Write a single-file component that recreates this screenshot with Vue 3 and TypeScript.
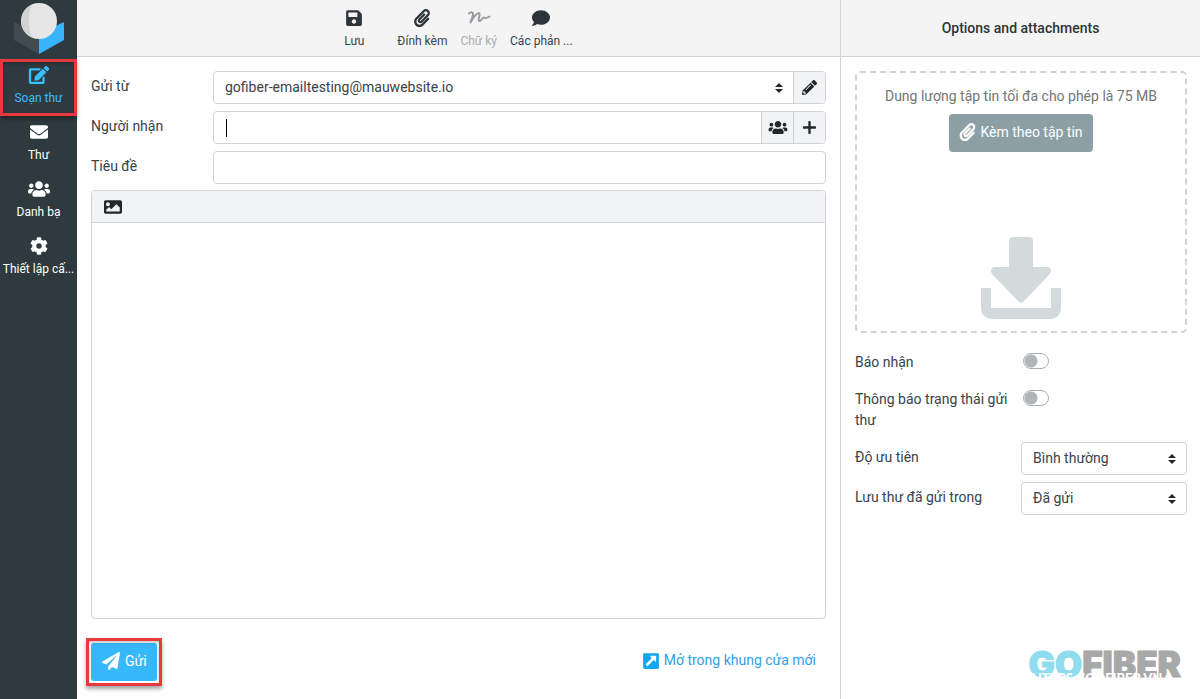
<script setup lang="ts">
import { ref } from 'vue'

interface Icon {
  box: string
  d: string
}

const icons: Record<string, Icon> = {
  edit: {
    box: '0 0 576 512',
    d: 'M402.6 83.2l90.2 90.2c3.8 3.8 3.8 10 0 13.8L274.4 405.6l-92.8 10.3c-12.4 1.4-22.9-9.1-21.5-21.5l10.3-92.8L388.8 83.2c3.8-3.8 10-3.8 13.8 0zm162-22.9l-48.8-48.8c-15.2-15.2-39.9-15.2-55.2 0l-35.4 35.4c-3.8 3.8-3.8 10 0 13.8l90.2 90.2c3.8 3.8 10 3.8 13.8 0l35.4-35.4c15.2-15.3 15.2-40 0-55.2zM384 346.2V448H64V128h229.8c3.2 0 6.2-1.3 8.5-3.5l40-40c7.6-7.6 2.2-20.5-8.5-20.5H48C21.5 64 0 85.5 0 112v352c0 26.5 21.5 48 48 48h352c26.5 0 48-21.5 48-48V306.2c0-10.7-12.9-16-20.5-8.5l-40 40c-2.2 2.3-3.5 5.3-3.5 8.5z',
  },
  envelope: {
    box: '0 0 512 512',
    d: 'M502.3 190.8c3.9-3.1 9.7-.2 9.7 4.7V400c0 26.5-21.5 48-48 48H48c-26.5 0-48-21.5-48-48V195.6c0-5 5.7-7.8 9.7-4.7 22.4 17.4 52.1 39.5 154.1 113.6 21.1 15.4 56.7 47.8 92.2 47.6 35.7.3 72-32.8 92.3-47.6 102-74.1 131.6-96.3 154-113.7zM256 320c23.2.4 56.6-29.2 73.4-41.4 132.7-96.3 142.8-104.7 173.4-128.7 5.8-4.5 9.2-11.5 9.2-18.9v-19c0-26.5-21.5-48-48-48H48c-26.5 0-48 21.5-48 48v19c0 7.4 3.4 14.3 9.2 18.9 30.6 23.9 40.7 32.4 173.4 128.7 16.8 12.2 50.2 41.8 73.4 41.4z',
  },
  users: {
    box: '0 0 640 512',
    d: 'M96 224c35.3 0 64-28.7 64-64s-28.7-64-64-64-64 28.7-64 64 28.7 64 64 64zm448 0c35.3 0 64-28.7 64-64s-28.7-64-64-64-64 28.7-64 64 28.7 64 64 64zm32 32h-64c-17.6 0-33.5 7.1-45.1 18.6 40.3 22.1 68.9 62 75.1 109.4h66c17.7 0 32-14.3 32-32v-32c0-35.3-28.7-64-64-64zm-256 0c61.9 0 112-50.1 112-112S381.9 32 320 32 208 82.1 208 144s50.1 112 112 112zm76.8 32h-8.3c-20.8 10-43.9 16-68.5 16s-47.6-6-68.5-16h-8.3C179.6 288 128 339.6 128 403.2V432c0 26.5 21.5 48 48 48h288c26.5 0 48-21.5 48-48v-28.8c0-63.6-51.6-115.2-115.2-115.2zm-223.7-13.4C161.5 263.1 145.6 256 128 256H64c-35.3 0-64 28.7-64 64v32c0 17.7 14.3 32 32 32h65.9c6.3-47.4 34.9-87.3 75.2-109.4z',
  },
  cog: {
    box: '0 0 512 512',
    d: 'M487.4 315.7l-42.6-24.6c4.3-23.2 4.3-47 0-70.2l42.6-24.6c4.9-2.8 7.1-8.6 5.5-14-11.1-35.6-30-67.8-54.7-94.6-3.8-4.1-10-5.1-14.8-2.3L380.8 110c-17.9-15.4-38.5-27.3-60.8-35.1V25.8c0-5.6-3.9-10.5-9.4-11.7-36.7-8.2-74.3-7.8-109.2 0-5.5 1.2-9.4 6.1-9.4 11.7V75c-22.2 7.9-42.8 19.8-60.8 35.1L88.7 85.5c-4.9-2.8-11-1.9-14.8 2.3-24.7 26.7-43.6 58.9-54.7 94.6-1.7 5.4.6 11.2 5.5 14L67.3 221c-4.3 23.2-4.3 47 0 70.2l-42.6 24.6c-4.9 2.8-7.1 8.6-5.5 14 11.1 35.6 30 67.8 54.7 94.6 3.8 4.1 10 5.1 14.8 2.3l42.6-24.6c17.9 15.4 38.5 27.3 60.8 35.1v49.2c0 5.6 3.9 10.5 9.4 11.7 36.7 8.2 74.3 7.8 109.2 0 5.5-1.2 9.4-6.1 9.4-11.7v-49.2c22.2-7.9 42.8-19.8 60.8-35.1l42.6 24.6c4.9 2.8 11 1.9 14.8-2.3 24.7-26.7 43.6-58.9 54.7-94.6 1.5-5.5-.7-11.3-5.6-14.1zM256 336c-44.1 0-80-35.9-80-80s35.9-80 80-80 80 35.9 80 80-35.9 80-80 80z',
  },
  save: {
    box: '0 0 448 512',
    d: 'M433.9 129.9l-83.9-83.8A48 48 0 0 0 316.1 32H48C21.5 32 0 53.5 0 80v352c0 26.5 21.5 48 48 48h352c26.5 0 48-21.5 48-48V163.9a48 48 0 0 0-14.1-34zM224 416c-35.3 0-64-28.7-64-64s28.7-64 64-64 64 28.7 64 64-28.7 64-64 64zm96-304.5V212c0 6.6-5.4 12-12 12H76c-6.6 0-12-5.4-12-12V108c0-6.6 5.4-12 12-12h228.5c3.2 0 6.2 1.3 8.5 3.5l3.5 3.5a12 12 0 0 1 3.5 8.5z',
  },
  paperclip: {
    box: '0 0 448 512',
    d: 'M43.246 466.142c-58.43-60.289-57.341-157.511 1.386-217.581L254.392 34c44.316-45.332 116.351-45.336 160.671 0 43.89 44.894 43.943 117.329 0 162.276L232.214 383.128c-29.855 30.537-78.633 30.111-107.982-.998-28.275-29.97-27.368-77.473 1.452-106.953l143.743-146.835c6.182-6.314 16.312-6.422 22.626-.241l22.861 22.379c6.315 6.182 6.422 16.312.241 22.626L171.427 319.927c-4.932 5.045-5.236 13.428-.648 18.292 4.372 4.634 11.245 4.711 15.688.165l182.849-186.851c19.613-20.062 19.613-52.725-.011-72.798-19.189-19.627-49.957-19.637-69.154 0L90.39 293.295c-34.763 35.56-35.299 93.12-1.191 128.313 34.01 35.093 88.985 35.137 123.058.286l172.06-175.999c6.177-6.319 16.307-6.433 22.626-.256l22.877 22.364c6.319 6.177 6.434 16.307.256 22.626l-172.06 175.998c-59.576 60.938-155.943 60.216-214.77-.485z',
  },
  comment: {
    box: '0 0 512 512',
    d: 'M256 32C114.6 32 0 125.1 0 240c0 49.6 21.4 95 57 130.7C44.5 421.1 2.7 466 2.2 466.5c-2.2 2.3-2.8 5.7-1.5 8.7S4.8 480 8 480c66.3 0 116-31.8 140.6-51.4 32.7 12.3 69 19.4 107.4 19.4 141.4 0 256-93.1 256-208S397.4 32 256 32z',
  },
  pencil: {
    box: '0 0 512 512',
    d: 'M497.9 142.1l-46.1 46.1c-4.7 4.7-12.3 4.7-17 0l-111-111c-4.7-4.7-4.7-12.3 0-17l46.1-46.1c18.7-18.7 49.1-18.7 67.9 0l60.1 60.1c18.8 18.7 18.8 49.1 0 67.9zM284.2 99.8L21.6 362.4.4 483.9c-2.9 16.4 11.4 30.6 27.8 27.8l121.5-21.3 262.6-262.6c4.7-4.7 4.7-12.3 0-17l-111-111c-4.8-4.7-12.4-4.7-17.1 0zM124.1 339.9c-5.5-5.5-5.5-14.3 0-19.8l154-154c5.5-5.5 14.3-5.5 19.8 0s5.5 14.3 0 19.8l-154 154c-5.5 5.5-14.3 5.5-19.8 0zM88 424h48v36.3l-64.5 11.3-31.1-31.1L51.7 376H88v48z',
  },
  plus: {
    box: '0 0 448 512',
    d: 'M424 216H264V56c0-13-11-24-24-24h-32c-13 0-24 11-24 24v160H24c-13 0-24 11-24 24v32c0 13 11 24 24 24h160v160c0 13 11 24 24 24h32c13 0 24-11 24-24V296h160c13 0 24-11 24-24v-32c0-13-11-24-24-24z',
  },
  image: {
    box: '0 0 512 512',
    d: 'M464 448H48c-26.5 0-48-21.5-48-48V112c0-26.5 21.5-48 48-48h416c26.5 0 48 21.5 48 48v288c0 26.5-21.5 48-48 48zM112 120c-30.9 0-56 25.1-56 56s25.1 56 56 56 56-25.1 56-56-25.1-56-56-56zM64 384h384V272l-87.5-87.5c-4.7-4.7-12.3-4.7-17 0L208 320l-55.5-55.5c-4.7-4.7-12.3-4.7-17 0L64 336v48z',
  },
  plane: {
    box: '0 0 512 512',
    d: 'M476 3.2L12.5 270.6c-18.1 10.4-15.8 35.6 2.2 43.2L121 358.4l287.3-253.2c5.5-4.9 13.3 2.6 8.6 8.3L176 407v80.5c0 23.6 28.5 32.9 42.5 15.8L282 426l124.6 52.2c14.2 6 30.4-2.9 33-18.2l72-432C515 7.8 493.3-6.8 476 3.2z',
  },
  external: {
    box: '0 0 448 512',
    d: 'M448 68v376c0 20-16 36-36 36H36c-20 0-36-16-36-36V68c0-20 16-36 36-36h376c20 0 36 16 36 36zM370 108H220c-16 0-24 18-13 29l38 38L78 342c-7 7-7 15 0 22l34 34c7 7 15 7 22 0l167-167 40 40c11 11 29 3 29-12V108z',
  },
}

const tasks = [
  { icon: 'edit', label: 'Soạn thư', active: true },
  { icon: 'envelope', label: 'Thư', active: false },
  { icon: 'users', label: 'Danh bạ', active: false },
  { icon: 'cog', label: 'Thiết lập cấ...', active: false },
]

const sender = ref('gofiber-emailtesting@mauwebsite.io')
const recipient = ref('')
const subject = ref('')
const message = ref('')
const receipt = ref(false)
const delivery = ref(false)
const priority = ref('Bình thường')
const folder = ref('Đã gửi')
</script>

<template>
  <div class="app">
    <nav class="sidebar">
      <svg class="logo" viewBox="0 0 50 52" aria-hidden="true">
        <path d="M0 19L25 31V51L0 37z" fill="#404c51" />
        <path d="M50 19L25 31V51L50 37z" fill="#37b4fb" />
        <circle cx="25" cy="18" r="18" fill="#e6e6e6" />
        <path d="M18 1.500a18 18 0 0 0 0 33C14 26 14 9 18 1.500z" fill="#d2d2d2" />
      </svg>
      <a v-for="t in tasks" :key="t.label" href="#" class="task" :class="{ active: t.active }">
        <svg :viewBox="icons[t.icon].box" aria-hidden="true"><path :d="icons[t.icon].d" /></svg>
        <span>{{ t.label }}</span>
        <i v-if="t.active" class="mark"></i>
      </a>
    </nav>

    <main class="compose">
      <header class="bar toolbar">
        <button type="button" class="tool wide">
          <svg :viewBox="icons.save.box" aria-hidden="true"><path :d="icons.save.d" /></svg>
          <span>Lưu</span>
        </button>
        <button type="button" class="tool">
          <svg :viewBox="icons.paperclip.box" aria-hidden="true"><path :d="icons.paperclip.d" /></svg>
          <span>Đính kèm</span>
        </button>
        <button type="button" class="tool" disabled>
          <svg class="signature" viewBox="0 0 24 18" aria-hidden="true">
            <path d="M2 4.500C4 2.500 6.500 3 6 6C5.500 9 4 11 3.500 13.500C6 9 9 4 12 4C14 4.500 10.500 11 12 12C14 12.500 15 8.500 17 8.500C18.500 8.500 18 10.500 22.500 7.500" />
          </svg>
          <span>Chữ ký</span>
        </button>
        <button type="button" class="tool">
          <svg :viewBox="icons.comment.box" aria-hidden="true"><path :d="icons.comment.d" /></svg>
          <span>Các phản ...</span>
        </button>
      </header>

      <form class="form" @submit.prevent>
        <div class="fields">
          <div class="row">
            <label for="from">Gửi từ</label>
            <div class="group">
              <div class="select">
                <select id="from" v-model="sender">
                  <option>gofiber-emailtesting@mauwebsite.io</option>
                </select>
                <svg viewBox="0 0 8 10" aria-hidden="true"><path d="M4 0L8 4H0zM4 10L0 6H8z" /></svg>
              </div>
              <button type="button" class="addon" aria-label="Sửa">
                <svg :viewBox="icons.pencil.box" aria-hidden="true"><path :d="icons.pencil.d" /></svg>
              </button>
            </div>
          </div>
          <div class="row">
            <label for="to">Người nhận</label>
            <div class="group">
              <input id="to" v-model="recipient" type="text" />
              <i class="caret"></i>
              <button type="button" class="addon" aria-label="Danh bạ">
                <svg class="people" :viewBox="icons.users.box" aria-hidden="true"><path :d="icons.users.d" /></svg>
              </button>
              <button type="button" class="addon" aria-label="Thêm">
                <svg :viewBox="icons.plus.box" aria-hidden="true"><path :d="icons.plus.d" /></svg>
              </button>
            </div>
          </div>
          <div class="row">
            <label for="subject">Tiêu đề</label>
            <div class="group"><input id="subject" v-model="subject" type="text" /></div>
          </div>
        </div>

        <div class="editor">
          <div class="editor-bar">
            <button type="button" aria-label="Hình ảnh">
              <svg :viewBox="icons.image.box" aria-hidden="true"><path :d="icons.image.d" /></svg>
            </button>
          </div>
          <textarea v-model="message" aria-label="Nội dung"></textarea>
        </div>

        <footer class="actions">
          <button type="submit" class="send">
            <svg :viewBox="icons.plane.box" aria-hidden="true"><path :d="icons.plane.d" /></svg>
            <span>Gửi</span>
            <i class="mark"></i>
          </button>
          <a href="#" class="open">
            <svg :viewBox="icons.external.box" aria-hidden="true"><path fill-rule="evenodd" :d="icons.external.d" /></svg>
            <span>Mở trong khung cửa mới</span>
          </a>
        </footer>
      </form>
    </main>

    <aside class="options">
      <header class="bar title"><h2>Options and attachments</h2></header>
      <div class="panel">
        <section class="drop">
          <p>Dung lượng tập tin tối đa cho phép là 75 MB</p>
          <button type="button" class="attach">
            <svg :viewBox="icons.paperclip.box" aria-hidden="true"><path :d="icons.paperclip.d" /></svg>
            <span>Kèm theo tập tin</span>
          </button>
          <svg class="download" viewBox="0 0 80 82" aria-hidden="true">
            <path d="M32 0H48Q52 0 52 4V30H66Q70 30 70 34Q70 36 68 38L43 64Q40 67 37 64L12 38Q10 36 10 34Q10 30 14 30H28V4Q28 0 32 0z" />
            <path d="M0 51H10V71H70V51H80V70Q80 82 68 82H12Q0 82 0 70z" />
          </svg>
        </section>
        <div class="option">
          <label for="receipt">Báo nhận</label>
          <input id="receipt" v-model="receipt" type="checkbox" class="toggle" />
        </div>
        <div class="option">
          <label for="delivery">Thông báo trạng thái gửi thư</label>
          <input id="delivery" v-model="delivery" type="checkbox" class="toggle" />
        </div>
        <div class="option">
          <label for="priority">Độ ưu tiên</label>
          <div class="select">
            <select id="priority" v-model="priority"><option>Bình thường</option></select>
            <svg viewBox="0 0 8 10" aria-hidden="true"><path d="M4 0L8 4H0zM4 10L0 6H8z" /></svg>
          </div>
        </div>
        <div class="option">
          <label for="folder">Lưu thư đã gửi trong</label>
          <div class="select">
            <select id="folder" v-model="folder"><option>Đã gửi</option></select>
            <svg viewBox="0 0 8 10" aria-hidden="true"><path d="M4 0L8 4H0zM4 10L0 6H8z" /></svg>
          </div>
        </div>
      </div>
    </aside>

    <div class="watermark">
      <b><span>GO</span>FIBER</b>
      <small>HTTPS://GOFIBER.VN/...</small>
    </div>
  </div>
</template>

<style>
body {
  background: #fff;
}
</style>

<style scoped>
* {
  box-sizing: border-box;
}
.app {
  position: relative;
  display: grid;
  grid-template-columns: 77px 1fr 360px;
  min-height: 100vh;
  color: #38434a;
  font: 14px/21px Roboto, "Noto Sans", sans-serif;
}
svg {
  display: block;
  fill: currentColor;
}
button,
input,
select,
textarea {
  margin: 0;
  padding: 0;
  border: 0;
  border-radius: 0;
  outline: 0;
  background: none;
  color: inherit;
  font: inherit;
}
a {
  text-decoration: none;
}

.sidebar {
  display: flex;
  flex-direction: column;
  align-items: stretch;
  background: #2f3a3f;
}
.logo {
  width: 50px;
  height: 52px;
  margin: 3px 0 4px 14px;
}
.task {
  position: relative;
  display: flex;
  flex-direction: column;
  align-items: center;
  gap: 5px;
  height: 57px;
  padding-top: 7px;
  color: #fff;
  font-size: 12px;
  line-height: 18px;
  white-space: nowrap;
}
.task svg {
  width: 22px;
  height: 18px;
}
.task.active {
  color: #37beff;
}
.mark {
  position: absolute;
  inset: 0;
  border: 3px solid #e8393d;
  box-shadow: 0 3px 4px rgba(0, 0, 0, 0.35), inset 0 2px 3px rgba(0, 0, 0, 0.2);
  pointer-events: none;
}

.compose {
  display: flex;
  flex-direction: column;
  min-width: 0;
}
.bar {
  display: flex;
  justify-content: center;
  height: 57px;
  flex: none;
  border-bottom: 1px solid #d0d4d6;
  background: #f4f4f4;
}
.toolbar {
  gap: 1px;
  padding-right: 20px;
}
.tool {
  display: flex;
  flex-direction: column;
  align-items: center;
  gap: 5px;
  padding: 9px 6px 0;
  font-size: 12px;
  line-height: 18px;
}
.tool svg {
  width: 20px;
  height: 18px;
  color: #2b353a;
}
.tool.wide {
  min-width: 72px;
}
.tool:disabled {
  color: #aaafb1;
}
.tool .signature {
  width: 24px;
  color: #999ea0;
  fill: none;
  stroke: currentColor;
  stroke-width: 2;
  stroke-linecap: round;
  stroke-linejoin: round;
}

.form {
  display: flex;
  flex: 1;
  flex-direction: column;
  gap: 6px;
  padding: 14px 14px 0;
}
.fields {
  display: grid;
  gap: 7px;
}
.row {
  display: grid;
  grid-template-columns: 122px 1fr;
}
.row label {
  padding-top: 5px;
}
.group {
  position: relative;
  display: flex;
  height: 33px;
  overflow: hidden;
  border: 1px solid #ced4da;
  border-radius: 4px;
}
.group input {
  flex: 1;
  min-width: 0;
  padding: 0 10px;
}
.select {
  position: relative;
  display: flex;
  flex: 1;
  min-width: 0;
}
.select select {
  flex: 1;
  min-width: 0;
  padding: 0 24px 0 11px;
  appearance: none;
}
.select svg {
  position: absolute;
  top: 11px;
  right: 10px;
  width: 8px;
  height: 10px;
  color: #20282c;
  pointer-events: none;
}
.caret {
  position: absolute;
  top: 7px;
  left: 12px;
  width: 1px;
  height: 18px;
  background: #000;
}
.addon {
  display: flex;
  align-items: center;
  justify-content: center;
  width: 32px;
  padding-bottom: 1px;
  border-left: 1px solid #ced4da;
  background: #f1f3f4;
  color: #20282c;
}
.addon svg {
  width: 15px;
  height: 15px;
}
.addon .people {
  width: 20px;
}

.editor {
  display: flex;
  flex: 1;
  flex-direction: column;
  overflow: hidden;
  border: 1px solid #ced4da;
  border-radius: 4px;
}
.editor-bar {
  display: flex;
  height: 32px;
  padding: 6px 12px;
  border-bottom: 1px solid #ced4da;
  background: #f1f3f4;
  color: #20282c;
}
.editor-bar svg {
  width: 18px;
  height: 18px;
}
.editor textarea {
  flex: 1;
  padding: 10px;
  resize: none;
}

.actions {
  display: flex;
  align-items: flex-start;
  justify-content: space-between;
  height: 74px;
  padding: 18px 10px 0 0;
}
.send {
  position: relative;
  display: flex;
  align-items: center;
  gap: 5px;
  height: 38px;
  padding: 0 10px 2px 11px;
  border-radius: 3px;
  background: #37b8fa;
  color: #fff;
}
.send svg {
  width: 18px;
  height: 18px;
}
.send .mark {
  inset: -5px;
}
.open {
  display: flex;
  align-items: center;
  gap: 5px;
  padding-top: 7px;
  color: #2f9fe8;
}
.open svg {
  width: 16px;
  height: 18px;
  color: #14a4f4;
}

.options {
  border-left: 1px solid #d0d4d6;
}
.title {
  align-items: center;
}
.title h2 {
  margin: 0;
  font-size: 14px;
  font-weight: 500;
  color: #2b353a;
}
.panel {
  display: flex;
  flex-direction: column;
  gap: 7px;
  padding: 14px 13px 14px 14px;
}
.drop {
  display: flex;
  flex-direction: column;
  align-items: center;
  height: 262px;
  margin-bottom: 7px;
  padding: 13px 10px 12px;
  border: 2px dashed #ced4d6;
  border-radius: 5px;
}
.drop p {
  margin: 0 0 7px;
  color: #737677;
}
.attach {
  display: flex;
  align-items: center;
  gap: 4px;
  height: 38px;
  padding: 0 10px 2px;
  border-radius: 4px;
  background: #8b9fa5;
  color: #fff;
}
.attach svg {
  width: 17px;
  height: 18px;
}
.download {
  width: 80px;
  height: 82px;
  margin-top: auto;
  fill: #d3dadc;
}
.option {
  display: grid;
  grid-template-columns: 166px 1fr;
  align-items: start;
}
.option label {
  padding: 5px 10px 4px 0;
}
.option .select {
  height: 33px;
  border: 1px solid #ced4da;
  border-radius: 4px;
}
.toggle {
  width: 26px;
  height: 16px;
  margin: 6px 0 0 2px;
  border: 1px solid #a9aeb1;
  border-radius: 8px;
  appearance: none;
  background: radial-gradient(circle at 7px 7px, #b0b5b8 6px, transparent 7px);
}
.toggle:checked {
  background: radial-gradient(circle at 17px 7px, #37beff 6px, transparent 7px);
}

.watermark {
  position: absolute;
  right: 19px;
  bottom: 14px;
  display: grid;
  justify-items: center;
  font-weight: 900;
  pointer-events: none;
}
.watermark b {
  color: #a8a8a8;
  font-family: Inter, sans-serif;
  font-size: 35px;
  font-weight: 900;
  line-height: 40px;
  -webkit-text-stroke: 1px currentColor;
}
.watermark b span {
  color: #8fdcee;
}
.watermark small {
  margin-top: -13px;
  color: #fff;
  font-family: Lato, sans-serif;
  font-size: 13px;
  line-height: 14px;
}
</style>
